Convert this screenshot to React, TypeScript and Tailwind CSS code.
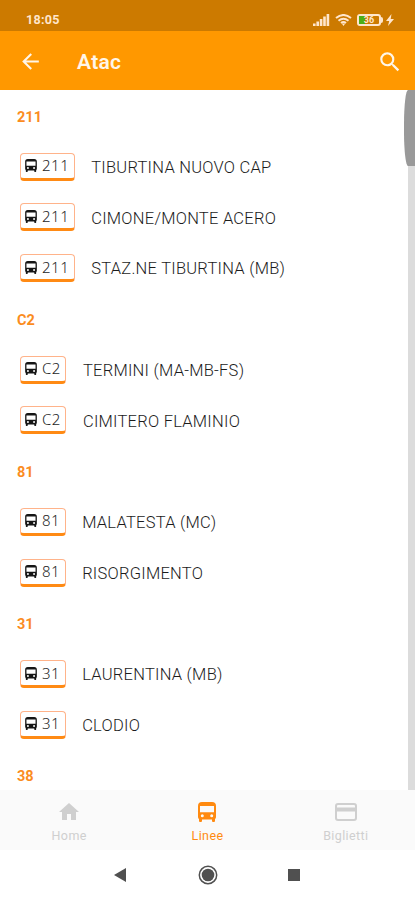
import { MdArrowBack, MdSearch, MdHome } from 'react-icons/md';

const groups = [
  { line: '211', stops: ['TIBURTINA NUOVO CAP', 'CIMONE/MONTE ACERO', 'STAZ.NE TIBURTINA (MB)'] },
  { line: 'C2', stops: ['TERMINI (MA-MB-FS)', 'CIMITERO FLAMINIO'] },
  { line: '81', stops: ['MALATESTA (MC)', 'RISORGIMENTO'] },
  { line: '31', stops: ['LAURENTINA (MB)', 'CLODIO'] },
  { line: '38', stops: [] },
];

function BusIcon({ className }: { className?: string }) {
  return (
    <svg viewBox="0 0 18 20" fill="currentColor" className={className}>
      <path
        fillRule="evenodd"
        d="M4 0H14Q18 0 18 4V15Q18 16.5 17 17V19Q17 20 16 20H15Q14 20 14 19V17.5H4V19Q4 20 3 20H2Q1 20 1 19V17Q0 16.5 0 15V4Q0 0 4 0ZM2 4V10.3H16V4ZM4.300 12.200A1.500 1.500 0 1 0 4.300 15.200A1.500 1.500 0 1 0 4.300 12.200ZM13.700 12.200A1.500 1.500 0 1 0 13.700 15.200A1.500 1.500 0 1 0 13.700 12.200Z"
      />
    </svg>
  );
}

function StatusBar() {
  return (
    <div className="h-[31px] shrink-0 bg-[#cc7a00] flex items-center justify-between pl-[26px] pr-[21px] pt-[8px] text-[#ffe6cc]">
      <span className="text-[12.5px] font-bold leading-none tracking-[0.3px] pt-px">18:05</span>
      <div className="flex items-center">
        <svg className="w-[17px] h-[12px]" viewBox="0 0 17 12" fill="currentColor">
          <path d="M0 9.5h2.6V12H0zM3.4 7.5H6V12H3.4zM6.8 5h2.6v7H6.8zM10.2 2.5h2.6V12h-2.6zM13.6 0h2.6v12h-2.6z" />
        </svg>
        <svg className="w-[17px] h-[12px] ml-[5px]" viewBox="0 0 17 12" fill="none" stroke="currentColor" strokeWidth="2">
          <path d="M1 4Q8.500-2 16 4M3.500 6.700Q8.500 2.700 13.500 6.700M6 9Q8.500 7 11 9" />
          <path d="M6.800 9.500h3.400L8.500 12z" fill="currentColor" stroke="none" />
        </svg>
        <div className="relative ml-[5px] w-[24px] h-[12px] border-2 border-current rounded-[3px] flex items-center">
          <div className="w-[6px] h-[8px] bg-[#4caf16]" />
          <span className="absolute inset-0 text-center text-[9px] leading-[8px] font-bold">36</span>
        </div>
        <div className="w-[2px] h-[6px] bg-current rounded-r-sm" />
        <svg className="w-[8px] h-[12px] ml-[3px]" viewBox="0 0 8 12" fill="currentColor">
          <path d="M5.500 0L0 7h3.200L2 12 8 5H4.700z" />
        </svg>
      </div>
    </div>
  );
}

function LineBadge({ line }: { line: string }) {
  return (
    <div className="h-[28px] min-w-[45px] mt-[-3px] shrink-0 flex items-center pl-[4px] pr-[4.5px] border border-b-[3px] border-[#ffb38a] border-b-[#ff8a14] rounded-[4px]">
      <BusIcon className="w-[12px] h-[13px] text-[#151515]" />
      <span className="ml-[5px] font-['Noto_Sans'] font-light text-[15px] leading-none tracking-[0.5px] text-[#262626]">{line}</span>
    </div>
  );
}

export default function App() {
  return (
    <div className="w-[415px] h-[900px] flex flex-col overflow-hidden bg-white font-[Roboto,sans-serif]">
      <StatusBar />
      <header className="h-[59px] shrink-0 bg-[#ff9800] flex items-center text-[#fff6e8] pl-[18px] pr-[12px] pt-[2px]">
        <MdArrowBack size={25} />
        <h1 className="ml-[34px] pt-[2px] text-[21px] font-semibold tracking-[0.3px]">Atac</h1>
        <MdSearch size={26} className="ml-auto" />
      </header>

      <main className="flex-1 min-h-0 flex overflow-hidden">
        <div className="flex-1 pt-[2px]">
          {groups.map((group) => (
            <section key={group.line}>
              <h2 className="h-[50.75px] pl-[17px] flex items-center text-[14.5px] font-bold text-[#fb8c1e]">{group.line}</h2>
              {group.stops.map((stop) => (
                <div key={stop} className="h-[50.75px] pl-[20px] flex items-center">
                  <LineBadge line={group.line} />
                  <span className="ml-[16.5px] text-[16.5px] font-light tracking-[0.25px] text-[#1c1c1c] whitespace-nowrap">{stop}</span>
                </div>
              ))}
            </section>
          ))}
        </div>
        {/* Scrollbar */}
        <div className="w-[11px] flex flex-col items-end">
          <div className="w-[11px] h-[76px] bg-[#999999] rounded-[4px_0_0_4px/34px_0_0_34px]" />
          <div className="w-[7px] flex-1 bg-[#dcdcdc]" />
        </div>
      </main>

      <nav className="h-[60px] shrink-0 bg-[#fafafa] grid grid-cols-3 text-[12.5px] tracking-[0.4px] text-[#cfcfcf]">
        <div className="flex flex-col items-center pt-[10px]">
          <MdHome size={24} />
          <span className="mt-[3px]">Home</span>
        </div>
        <div className="flex flex-col items-center pt-[12px] text-[#ff8a10]">
          <BusIcon className="w-[18px] h-[20px]" />
          <span className="mt-[5px]">Linee</span>
        </div>
        <div className="flex flex-col items-center pt-[12px]">
          <svg className="w-[22px] h-[20px]" viewBox="0 0 22 20" fill="none" stroke="currentColor">
            <rect x="1" y="2" width="20" height="16" rx="2" strokeWidth="2" />
            <path d="M1 7.500h20" strokeWidth="4" />
          </svg>
          <span className="mt-[5px]">Biglietti</span>
        </div>
      </nav>

      <footer className="h-[50px] shrink-0 grid grid-cols-[127px_1fr_127px] items-center text-[#505050]">
        <svg className="w-[14px] h-[14px] justify-self-end" viewBox="0 0 14 14" fill="currentColor">
          <path d="M13 0v14L1 7z" />
        </svg>
        <svg className="w-[20px] h-[20px] justify-self-center" viewBox="0 0 20 20">
          <circle cx="10" cy="10" r="8.700" fill="none" stroke="currentColor" strokeWidth="1.500" />
          <circle cx="10" cy="10" r="6.300" fill="currentColor" />
        </svg>
        <div className="size-[12px] bg-current" />
      </footer>
    </div>
  );
}
